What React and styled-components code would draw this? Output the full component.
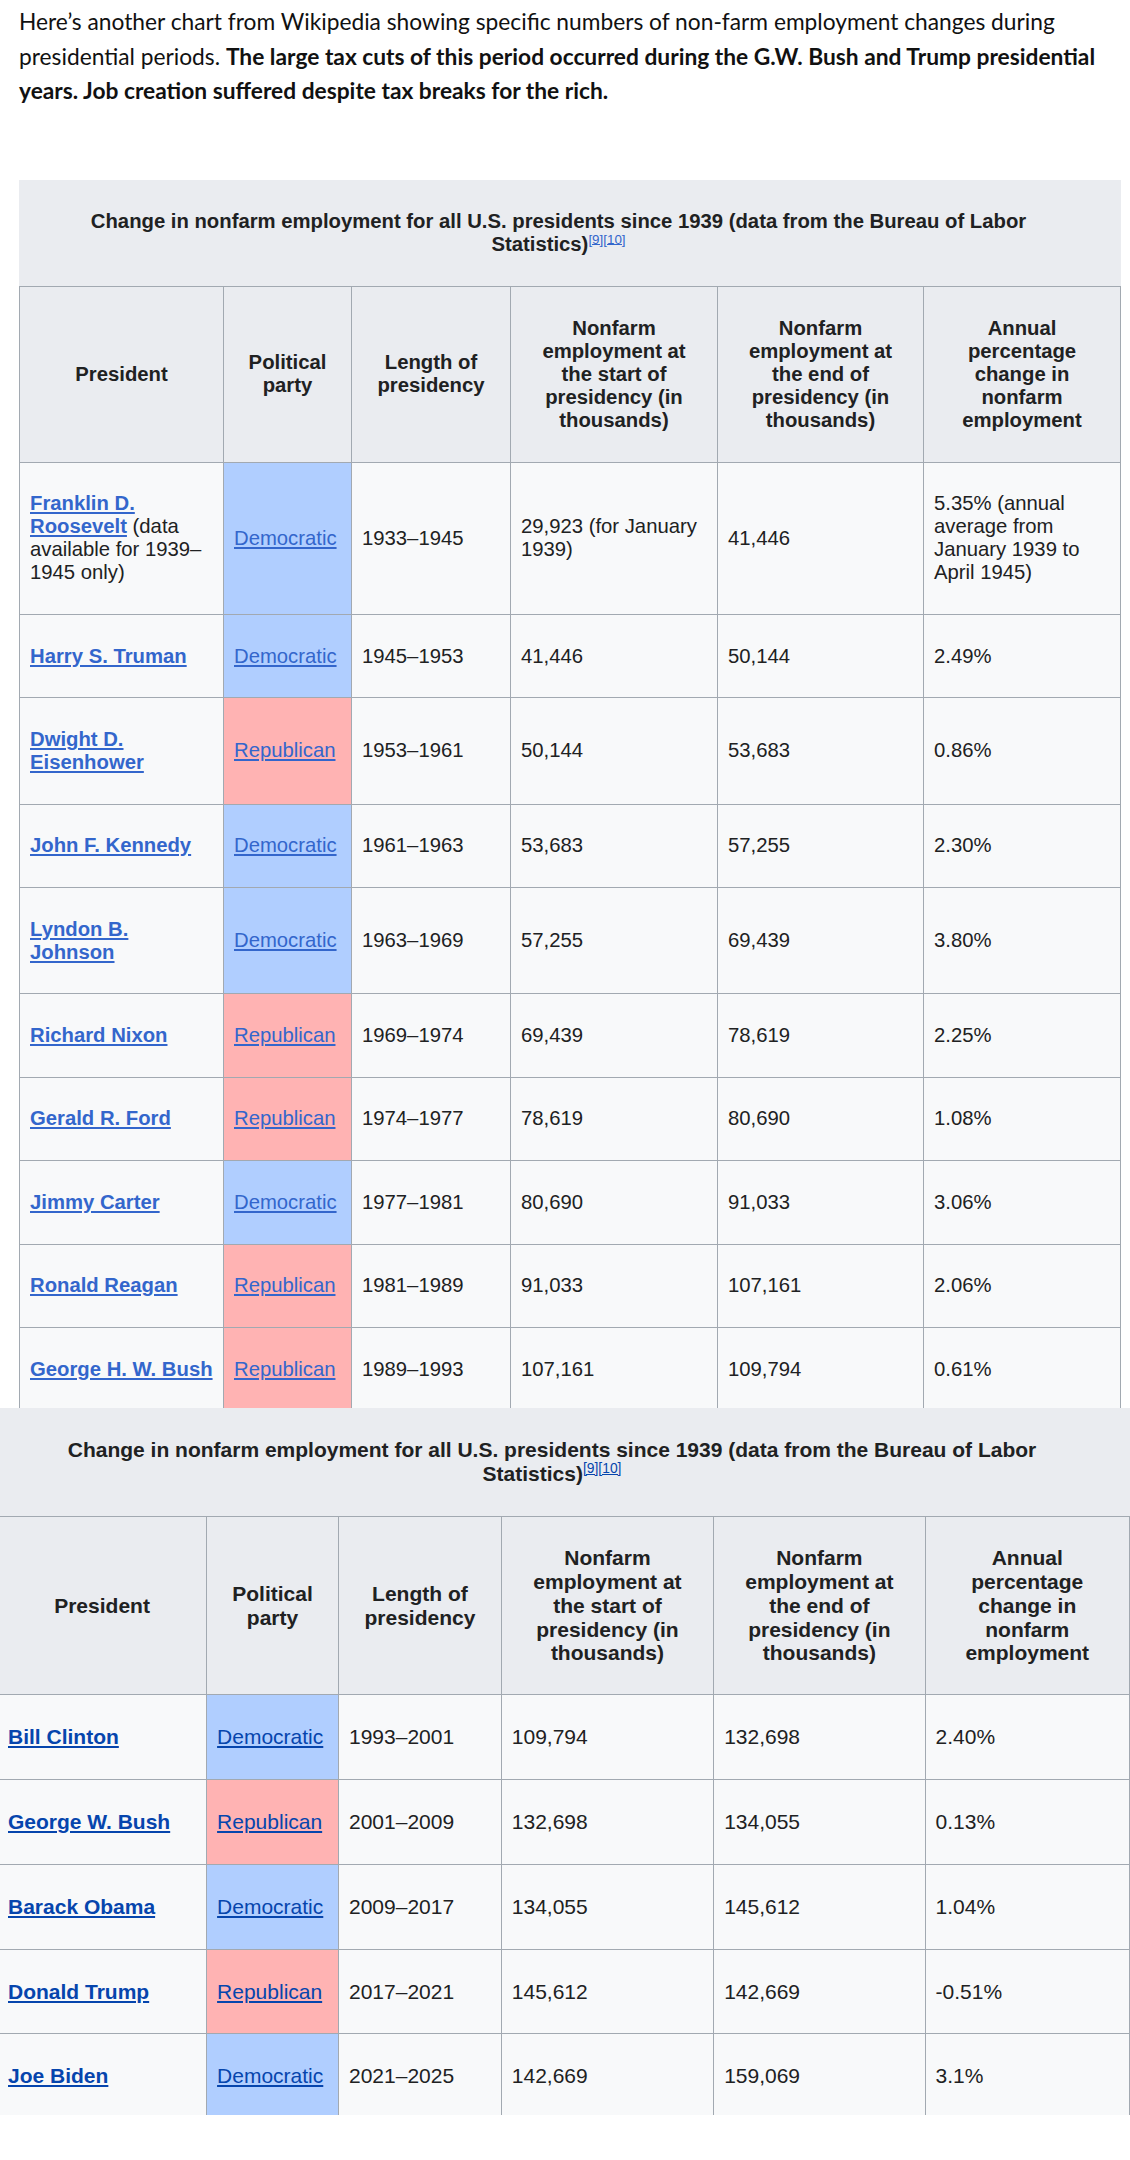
import React from 'react';
import styled, { createGlobalStyle } from 'styled-components';

const borderColor = '#a2a9b1';
const headBg = '#eaecf0';
const cellBg = '#f8f9fa';
const partyBg = { Democratic: '#b0ceff', Republican: '#ffb3b3' };

const GlobalStyle = createGlobalStyle`
  html, body {
    margin: 0;
    padding: 0;
    background: #fff;
    overflow-x: hidden;
  }
`;

const Page = styled.div`
  width: 1130px;
  overflow: hidden;
`;

const Intro = styled.p`
  margin: 5px 0 0;
  padding: 0 8px 0 19px;
  font-family: Lato, "Open Sans", sans-serif;
  font-size: 22.75px;
  line-height: 34.5px;
  color: #111;

  b {
    font-weight: 700;
  }
`;

const Section = styled.div`
  margin-top: ${p => p.$top}px;
  margin-left: ${p => p.$left}px;
`;

const Table = styled.table`
  border-collapse: collapse;
  table-layout: fixed;
  font-family: "Liberation Sans", Arial, sans-serif;
  font-size: ${p => p.$m.size}px;
  line-height: ${p => p.$m.lh}px;
  color: #202122;
  background: ${cellBg};
`;

const Col = styled.col`
  width: ${p => p.$w}px;
`;

const Caption = styled.caption`
  background: ${headBg};
  font-weight: 700;
  padding: ${p => p.$pad}px 52px ${p => p.$pad}px 29px;
  text-align: center;
`;

const Refs = styled.sup`
  font-size: 0.66em;
  font-weight: 400;
  line-height: 0;
  vertical-align: 0.55em;

  a {
    color: ${p => p.$link};
    text-decoration: underline;
  }
`;

const Th = styled.th`
  background: ${headBg};
  border: 1px solid ${borderColor};
  padding: ${p => p.$padY}px 15px;
  font-weight: 700;
  text-align: center;
  vertical-align: middle;
`;

const Td = styled.td`
  border: 1px solid ${borderColor};
  border-bottom: ${p => (p.$cutPad ? 'none' : `1px solid ${borderColor}`)};
  padding: ${p => p.$padY}px 10px ${p => p.$cutPad || p.$padY}px;
  vertical-align: middle;
  text-align: left;
  background: ${p => p.$bg || cellBg};
`;

const NameLink = styled.a`
  color: ${p => p.$link};
  font-weight: 700;
  text-decoration: underline;
`;

const PartyLink = styled.a`
  color: ${p => p.$link};
  text-decoration: underline;
`;

const headers = [
  'President',
  'Political party',
  'Length of presidency',
  'Nonfarm employment at the start of presidency (in thousands)',
  'Nonfarm employment at the end of presidency (in thousands)',
  'Annual percentage change in nonfarm employment',
];

const firstRows = [
  ['Franklin D. Roosevelt', 'Democratic', '1933–1945', '29,923 (for January 1939)', '41,446', '5.35% (annual average from January 1939 to April 1945)', ' (data available for 1939–1945 only)'],
  ['Harry S. Truman', 'Democratic', '1945–1953', '41,446', '50,144', '2.49%'],
  ['Dwight D. Eisenhower', 'Republican', '1953–1961', '50,144', '53,683', '0.86%'],
  ['John F. Kennedy', 'Democratic', '1961–1963', '53,683', '57,255', '2.30%'],
  ['Lyndon B. Johnson', 'Democratic', '1963–1969', '57,255', '69,439', '3.80%'],
  ['Richard Nixon', 'Republican', '1969–1974', '69,439', '78,619', '2.25%'],
  ['Gerald R. Ford', 'Republican', '1974–1977', '78,619', '80,690', '1.08%'],
  ['Jimmy Carter', 'Democratic', '1977–1981', '80,690', '91,033', '3.06%'],
  ['Ronald Reagan', 'Republican', '1981–1989', '91,033', '107,161', '2.06%'],
  ['George H. W. Bush', 'Republican', '1989–1993', '107,161', '109,794', '0.61%'],
];

const secondRows = [
  ['Bill Clinton', 'Democratic', '1993–2001', '109,794', '132,698', '2.40%'],
  ['George W. Bush', 'Republican', '2001–2009', '132,698', '134,055', '0.13%'],
  ['Barack Obama', 'Democratic', '2009–2017', '134,055', '145,612', '1.04%'],
  ['Donald Trump', 'Republican', '2017–2021', '145,612', '142,669', '-0.51%'],
  ['Joe Biden', 'Democratic', '2021–2025', '142,669', '159,069', '3.1%'],
];

// sizes of the two screenshots differ a little, so each table gets its own metrics
const firstMetrics = { size: 20.3, lh: 23, cap: 30, head: 30, row: 29.7, cut: 27, link: '#3366cc' };
const secondMetrics = { size: 21, lh: 23.8, cap: 30.5, head: 29, row: 30, cut: 27, link: '#0645ad' };

function EmploymentTable({ rows, widths, m }) {
  return (
    <Table $m={m}>
      <Caption $pad={m.cap}>
        Change in nonfarm employment for all U.S. presidents since 1939 (data from the Bureau of Labor Statistics)
        <Refs $link={m.link}><a>[9]</a><a>[10]</a></Refs>
      </Caption>
      <colgroup>
        {widths.map((w, i) => <Col key={i} $w={w} />)}
      </colgroup>
      <thead>
        <tr>
          {headers.map(h => <Th key={h} $padY={m.head}>{h}</Th>)}
        </tr>
      </thead>
      <tbody>
        {rows.map((r, i) => {
          const cutPad = i === rows.length - 1 ? m.cut : 0;
          return (
            <tr key={r[0]}>
              <Td $padY={m.row} $cutPad={cutPad}>
                <NameLink $link={m.link}>{r[0]}</NameLink>
                {r[6]}
              </Td>
              <Td $padY={m.row} $cutPad={cutPad} $bg={partyBg[r[1]]}>
                <PartyLink $link={m.link}>{r[1]}</PartyLink>
              </Td>
              <Td $padY={m.row} $cutPad={cutPad}>{r[2]}</Td>
              <Td $padY={m.row} $cutPad={cutPad}>{r[3]}</Td>
              <Td $padY={m.row} $cutPad={cutPad}>{r[4]}</Td>
              <Td $padY={m.row} $cutPad={cutPad}>{r[5]}</Td>
            </tr>
          );
        })}
      </tbody>
    </Table>
  );
}

export default function App() {
  return (
    <Page>
      <GlobalStyle />
      <Intro>
        Here’s another chart from Wikipedia showing specific numbers of non-farm employment changes during
        presidential periods. <b>The large tax cuts of this period occurred during the G.W. Bush and Trump presidential
        years. Job creation suffered despite tax breaks for the rich.</b>
      </Intro>
      <Section $top={71} $left={19}>
        <EmploymentTable rows={firstRows} widths={[204, 128, 159, 207, 206, 197]} m={firstMetrics} />
      </Section>
      <Section $top={0} $left={-3}>
        <EmploymentTable rows={secondRows} widths={[210, 132, 163, 213, 212, 205]} m={secondMetrics} />
      </Section>
    </Page>
  );
}
